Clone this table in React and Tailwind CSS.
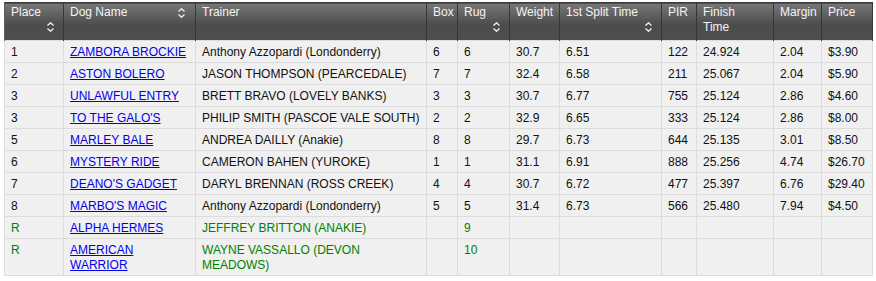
import React from "react";

const widths = [59, 132, 231, 31, 52, 50, 102, 35, 77, 48, 51];

const SortIcon = () => (
  <svg width="7" height="10" viewBox="0 0 7 10" className="inline-block">
    <path d="M0.5 3.5 L3.5 0.8 L6.5 3.5" fill="none" stroke="#f2f2f2" strokeWidth="1.3" />
    <path d="M0.5 6.5 L3.5 9.2 L6.5 6.5" fill="none" stroke="#f2f2f2" strokeWidth="1.3" />
  </svg>
);

const rows = [
  ["1", "ZAMBORA BROCKIE", "Anthony Azzopardi (Londonderry)", "6", "6", "30.7", "6.51", "122", "24.924", "2.04", "$3.90"],
  ["2", "ASTON BOLERO", "JASON THOMPSON (PEARCEDALE)", "7", "7", "32.4", "6.58", "211", "25.067", "2.04", "$5.90"],
  ["3", "UNLAWFUL ENTRY", "BRETT BRAVO (LOVELY BANKS)", "3", "3", "30.7", "6.77", "755", "25.124", "2.86", "$4.60"],
  ["3", "TO THE GALO'S", "PHILIP SMITH (PASCOE VALE SOUTH)", "2", "2", "32.9", "6.65", "333", "25.124", "2.86", "$8.00"],
  ["5", "MARLEY BALE", "ANDREA DAILLY (Anakie)", "8", "8", "29.7", "6.73", "644", "25.135", "3.01", "$8.50"],
  ["6", "MYSTERY RIDE", "CAMERON BAHEN (YUROKE)", "1", "1", "31.1", "6.91", "888", "25.256", "4.74", "$26.70"],
  ["7", "DEANO'S GADGET", "DARYL BRENNAN (ROSS CREEK)", "4", "4", "30.7", "6.72", "477", "25.397", "6.76", "$29.40"],
  ["8", "MARBO'S MAGIC", "Anthony Azzopardi (Londonderry)", "5", "5", "31.4", "6.73", "566", "25.480", "7.94", "$4.50"],
  ["R", "ALPHA HERMES", "JEFFREY BRITTON (ANAKIE)", "", "9", "", "", "", "", "", "", true],
  ["R", "AMERICAN WARRIOR", "WAYNE VASSALLO (DEVON MEADOWS)", "", "10", "", "", "", "", "", "", true],
];

const th = "align-top text-left font-normal text-[#f4f4f4] pl-[6px] pr-[9px] pt-[2px] leading-[15px] border-r border-[#363636] border-l border-l-[#5c5c5c] h-[38px]";

export default function App() {
  return (
    <div className="pt-[2px] pl-[4px] bg-white w-[876px] h-[281px]" style={{ fontFamily: '"Liberation Sans", Arial, sans-serif' }}>
      <table className="table-fixed border-collapse text-[12px] w-[868px]">
        <colgroup>
          {widths.map((w, i) => (
            <col key={i} style={{ width: w }} />
          ))}
        </colgroup>
        <thead>
          <tr className="bg-gradient-to-b from-[#767676] via-[#4c4c4c] via-60% to-[#4e4e4e] border border-[#3c3c3c]">
            <th className={th}>
              <div>Place</div>
              <div className="flex justify-end pt-[2px]"><SortIcon /></div>
            </th>
            <th className={th}>
              <div className="flex justify-between items-center pr-[1px]">
                <span>Dog Name</span>
                <SortIcon />
              </div>
            </th>
            <th className={th}>Trainer</th>
            <th className={th}>Box</th>
            <th className={th}>
              <div>Rug</div>
              <div className="flex justify-end pt-[2px]"><SortIcon /></div>
            </th>
            <th className={th}>Weight</th>
            <th className={th}>
              <div>1st Split Time</div>
              <div className="flex justify-end pt-[2px]"><SortIcon /></div>
            </th>
            <th className={th}>PIR</th>
            <th className={th}>
              <div>Finish</div>
              <div>Time</div>
            </th>
            <th className={th}>Margin</th>
            <th className={th}>Price</th>
          </tr>
        </thead>
        <tbody>
          {rows.map((r, i) => {
            const green = r[11];
            return (
              <tr key={i} className="bg-[#f0f0f0]">
                {r.slice(0, 11).map((c, j) => (
                  <td
                    key={j}
                    className={`align-top border border-[#dcdcdc] pl-[6px] pr-[4px] pt-[4px] pb-[2.5px] leading-[14.5px] ${green ? "text-[#008000]" : "text-[#111]"}`}
                  >
                    {j === 1 ? (
                      <a href="#" className="text-[#0000ee] underline">{c}</a>
                    ) : (
                      c
                    )}
                  </td>
                ))}
              </tr>
            );
          })}
        </tbody>
      </table>
    </div>
  );
}
